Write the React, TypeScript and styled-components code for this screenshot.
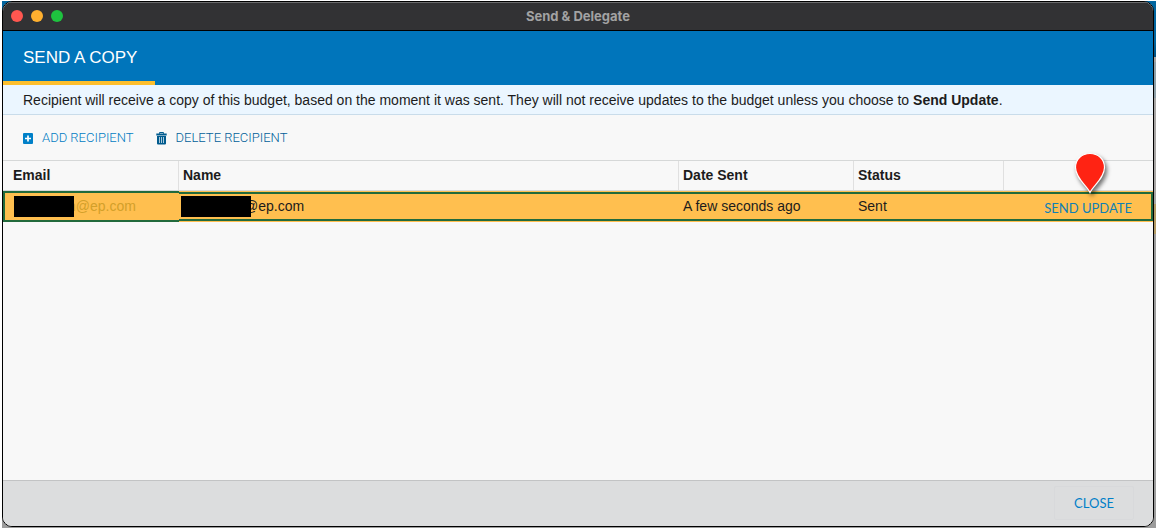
import React from "react";
import styled, { createGlobalStyle, css } from "styled-components";

const GlobalStyle = createGlobalStyle`
  *, *::before, *::after { box-sizing: border-box; }
  body { margin: 0; background: #ffffff; }
  button { font: inherit; }
`;

const sans = `"Liberation Sans", Arial, sans-serif`;
const lato = `Lato, "Liberation Sans", sans-serif`;

const Desktop = styled.div`
  display: flex;
  min-height: 100vh;
  padding: 1px 0 3px 2px;
  font-family: ${sans};
  font-size: 14px;
  color: #1c1c1c;
`;

const Backdrop = styled.div`
  flex: 1;
  display: flex;
  padding: 0 2px 1px 0;
  background: linear-gradient(
    #00659f 0 40px, #004f80 56px, #a3a3a3 56px 61px, #8fa0a8 61px 97px,
    #a8a6a5 97px 203px, #b39a64 203px 233px, #9c9c9c 233px 100%
  );
`;

const Window = styled.section`
  flex: 1;
  display: flex;
  flex-direction: column;
  overflow: hidden;
  border: 1px solid #000000;
  border-radius: 10px;
  background: #f8f8f8;
`;

const TitleBar = styled.header`
  display: grid;
  grid-template-columns: 1fr auto 1fr;
  align-items: center;
  height: 29px;
  padding: 0 8px;
  border-top: 1px solid #6b6b6c;
  border-bottom: 1px solid #000000;
  background: #323234;
`;

const Lights = styled.div`
  display: flex;
  gap: 8px;
  padding-bottom: 1px;
`;

const Light = styled.button<{ $color: string }>`
  width: 12px;
  height: 12px;
  padding: 0;
  border: 0;
  border-radius: 50%;
  background: ${(p) => p.$color};
`;

const Title = styled.h1`
  margin: 0;
  padding-bottom: 2px;
  font: 700 13px/16px Inter, ${sans};
  color: #a2a2a3;
`;

const Tabs = styled.nav`
  display: flex;
  background: #0075bb;
`;

const Tab = styled.button`
  height: 54px;
  padding: 3px 18px 0 20px;
  border: 0;
  border-bottom: 4px solid #fdbf2d;
  background: transparent;
  color: #ffffff;
  font-size: 17px;
  line-height: 20px;
`;

const Notice = styled.p`
  margin: 0;
  padding: 6px 20px 5px;
  border-bottom: 1px solid #c9dcea;
  background: #ebf6ff;
  line-height: 18px;
`;

const Toolbar = styled.div`
  display: flex;
  gap: 22px;
  padding: 13px 20px 12px;
`;

const ToolButton = styled.button<{ $dark?: boolean }>`
  display: flex;
  align-items: center;
  gap: 9px;
  padding: 0;
  border: 0;
  background: transparent;
  color: ${(p) => (p.$dark ? "#005f9a" : "#007cc3")};
  font: 300 13px/20px Roboto, ${sans};

  svg { display: block; }
`;

const Table = styled.table`
  width: 100%;
  table-layout: fixed;
  border-collapse: separate;
  border-spacing: 0;
  border-top: 1px solid #d6d8d8;
`;

const Column = styled.col<{ $width?: number }>`
  ${(p) => p.$width && `width: ${p.$width}px;`}
`;

const HeadCell = styled.th`
  position: relative;
  height: 30px;
  padding: 0 4px 2px;
  border-right: 1px solid #e0e0e0;
  border-bottom: 1px solid #d6d8d8;
  text-align: left;
  font-weight: 700;
  line-height: 18px;

  &:first-child { padding-left: 10px; }
  &:last-child { border-right: 0; }
`;

const rowEdges = `inset 0 1px #ffbf4f, inset 0 -1px #ffbf4f`;
const green = "#226a3c";

const Cell = styled.td<{ $focused?: boolean; $end?: boolean }>`
  height: 31px;
  padding: 0 5px 2px 4px;
  background: #ffbf4f;
  line-height: 18px;
  box-shadow: ${rowEdges}, inset 0 3px ${green}, inset 0 -3px ${green};

  ${(p) => p.$focused && css`
    padding-left: 10px;
    color: #d3a02a;
    box-shadow: inset 2px 2px ${green}, inset 0 -2px ${green};
  `}
  ${(p) => p.$end && css`
    padding-right: 21px;
    text-align: right;
    box-shadow: ${rowEdges}, inset -2px 3px ${green}, inset 0 -3px ${green};
  `}
`;

const Address = styled.div<{ $masked: number }>`
  position: relative;
  padding-left: ${(p) => p.$masked}px;
`;

const Redaction = styled.span<{ $left: number; $width: number }>`
  position: absolute;
  top: -1px;
  left: ${(p) => p.$left}px;
  width: ${(p) => p.$width}px;
  height: 21px;
  background: #000000;
`;

const UpdateButton = styled.button`
  padding: 4px 0 0;
  border: 0;
  background: transparent;
  color: #0f80b4;
  font: 400 13px/18px ${lato};
`;

const Pin = styled.svg`
  position: absolute;
  z-index: 2;
  top: -9px;
  right: 43px;
  overflow: visible;
  filter: drop-shadow(2px 3px 2px rgba(0, 0, 0, 0.55));
`;

const Footer = styled.footer`
  display: flex;
  justify-content: flex-end;
  margin-top: auto;
  padding: 5px 19px 6px;
  border-top: 1px solid #c2c3c4;
  background: #dcddde;
`;

const CloseButton = styled.button`
  width: 80px;
  height: 34px;
  padding: 0;
  border: 1px solid #d8d9db;
  border-radius: 2px;
  background: transparent;
  color: #007fc8;
  font: 400 13px/18px ${lato};
`;

const PlusIcon = () => (
  <svg width="10" height="11" viewBox="0 0 10 11" aria-hidden="true">
    <rect width="10" height="11" rx="1" fill="#0080c8" />
    <path d="M5 2.500v6M2 5.500h6" stroke="#fff" strokeWidth="1.700" />
  </svg>
);

const TrashIcon = () => (
  <svg width="11" height="13" viewBox="0 0 11 13" aria-hidden="true">
    <path d="M3.500 1.800V.5h4v1.300" fill="none" stroke="#005b8e" />
    <path d="M.3 1.500h10.400v1.900H.3zM1 4h9v7.500q0 1-1 1H2q-1 0-1-1z" fill="#005b8e" />
    <path d="M3.500 5v6M5.500 5v6M7.500 5v6" stroke="#d7e6ee" strokeWidth=".8" />
  </svg>
);

export default function App() {
  return (
    <>
      <GlobalStyle />
      <Desktop>
        <Backdrop>
          <Window>
            <TitleBar>
              <Lights>
                <Light $color="#ff5750" aria-label="Close window" />
                <Light $color="#ffb02f" aria-label="Minimize window" />
                <Light $color="#1ec23f" aria-label="Zoom window" />
              </Lights>
              <Title>Send &amp; Delegate</Title>
            </TitleBar>
            <Tabs>
              <Tab>SEND A COPY</Tab>
            </Tabs>
            <Notice>
              Recipient will receive a copy of this budget, based on the moment it was sent. They
              will not receive updates to the budget unless you choose to <b>Send Update</b>.
            </Notice>
            <Toolbar>
              <ToolButton><PlusIcon />ADD RECIPIENT</ToolButton>
              <ToolButton $dark><TrashIcon />DELETE RECIPIENT</ToolButton>
            </Toolbar>
            <Table>
              <colgroup>
                <Column $width={176} />
                <Column $width={500} />
                <Column $width={175} />
                <Column $width={150} />
                <Column />
              </colgroup>
              <thead>
                <tr>
                  <HeadCell scope="col">Email</HeadCell>
                  <HeadCell scope="col">Name</HeadCell>
                  <HeadCell scope="col">Date Sent</HeadCell>
                  <HeadCell scope="col">Status</HeadCell>
                  <HeadCell>
                    <Pin width="40" height="42" viewBox="0 0 40 42" aria-hidden="true">
                      <path
                        d="M20 40.500C17 34 5.500 26 5.500 15.500C5.500 7 12 1.500 20 1.500C28 1.500 34.500 7 34.500 15.500C34.500 26 23 34 20 40.500Z"
                        fill="#ff2313"
                        stroke="#ffffff"
                        strokeWidth="1.200"
                      />
                    </Pin>
                  </HeadCell>
                </tr>
              </thead>
              <tbody>
                <tr>
                  <Cell $focused>
                    <Address $masked={55}>n@ep.com<Redaction $left={1} $width={60} /></Address>
                  </Cell>
                  <Cell>
                    <Address $masked={61}>@ep.com<Redaction $left={-2} $width={70} /></Address>
                  </Cell>
                  <Cell>A few seconds ago</Cell>
                  <Cell>Sent</Cell>
                  <Cell $end><UpdateButton>SEND UPDATE</UpdateButton></Cell>
                </tr>
              </tbody>
            </Table>
            <Footer>
              <CloseButton>CLOSE</CloseButton>
            </Footer>
          </Window>
        </Backdrop>
      </Desktop>
    </>
  );
}
